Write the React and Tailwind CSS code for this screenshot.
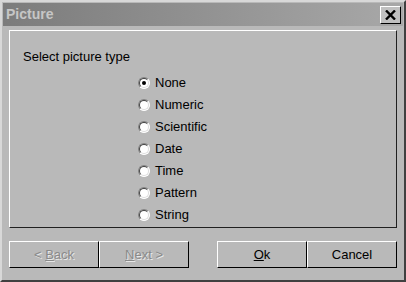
const options = ['None', 'Numeric', 'Scientific', 'Date', 'Time', 'Pattern', 'String']

function Radio({ checked }) {
  return (
    <span className="relative inline-block h-[12px] w-[12px] shrink-0 rounded-full border border-t-[#808080] border-l-[#808080] border-r-white border-b-white bg-white">
      <span className="absolute inset-0 rounded-full border border-t-[#404040] border-l-[#404040] border-r-[#dcdcdc] border-b-[#dcdcdc]" />
      {checked && <span className="absolute left-[3px] top-[3px] h-[4px] w-[4px] rounded-full bg-black" />}
    </span>
  )
}

function Btn({ children, disabled }) {
  return (
    <button
      type="button"
      className={
        'flex h-[27px] w-[90px] items-center justify-center border border-t-white border-l-white border-r-black border-b-black text-[13px] ' +
        (disabled ? 'text-[#8a8a8a] [text-shadow:1px_1px_0_#e8e8e8]' : 'text-black')
      }
    >
      <span className="whitespace-pre">{children}</span>
    </button>
  )
}

export default function App() {
  return (
    <div
      className="flex h-[282px] w-[406px] flex-col border-[2px] border-t-[#d8d8d8] border-l-[#d8d8d8] border-r-[#404040] border-b-[#404040] bg-[#b9b9b9] p-[1px]"
      style={{ fontFamily: '"Liberation Sans", Arial, sans-serif' }}
    >
      <div className="flex h-[23px] items-center justify-between bg-gradient-to-r from-[#7c7c7c] to-[#a8a8a8] pl-[3px] pr-[2px]">
        <span className="text-[14px] font-bold text-[#c6c6c6]">Picture</span>
        <span className="flex h-[18px] w-[21px] items-center justify-center border border-t-white border-l-white border-r-black border-b-black bg-[#c0c0c0]">
          <svg width="11" height="10" viewBox="0 0 11 10">
            <path d="M1 0.5 L10 9.5 M10 0.5 L1 9.5" stroke="black" strokeWidth="2.4" />
          </svg>
        </span>
      </div>
      <div className="flex flex-1 flex-col px-[6px] pt-[4px]">
        <div className="flex h-[198px] flex-col border-[1.5px] border-t-white border-l-white border-r-[#202020] border-b-[#202020] pl-[13px] pt-[16px]">
          <div className="text-[13px] leading-[20px] text-black">Select picture type</div>
          <div className="mt-[5px] flex flex-col pl-[115px]">
            {options.map((o, i) => (
              <label key={o} className="flex h-[22px] items-center gap-[5px] text-[13px] text-black">
                <Radio checked={i === 0} />
                <span>{o}</span>
              </label>
            ))}
          </div>
        </div>
        <div className="mt-[13px] flex">
          <Btn disabled>
            {'< '}
            <span className="underline">B</span>ack
          </Btn>
          <Btn disabled>
            <span className="underline">N</span>ext &gt;
          </Btn>
          <div className="w-[28px]" />
          <Btn>
            <span className="underline">O</span>k
          </Btn>
          <Btn>Cancel</Btn>
        </div>
      </div>
    </div>
  )
}
